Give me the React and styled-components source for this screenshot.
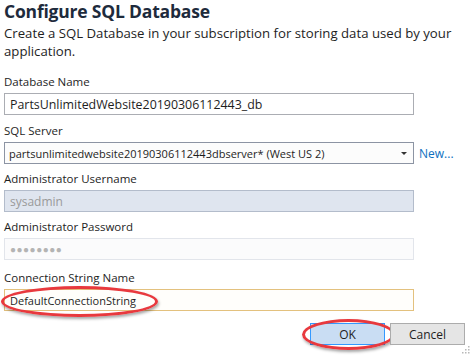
import React from 'react';
import styled, { createGlobalStyle } from 'styled-components';

const Global = createGlobalStyle`
  html, body { margin: 0; padding: 0; background: #ffffff; }
  body { font-family: "Open Sans", "Noto Sans", sans-serif; color: #1e1e1e; }
`;

const Page = styled.div`
  position: relative;
  width: 471px;
  height: 355px;
  box-sizing: border-box;
  padding: 0 6px 0 4px;
  overflow: hidden;
  display: flex;
  flex-direction: column;
`;

const Title = styled.h1`
  margin: 0;
  font-size: 17.5px;
  font-weight: 700;
  letter-spacing: -0.2px;
  line-height: 22px;
  color: #1e2b3c;
`;

const Subtitle = styled.p`
  margin: 2px 0 0;
  font-size: 13.2px;
  line-height: 18px;
  color: #1e1e1e;
`;

const Field = styled.div`
  display: flex;
  flex-direction: column;
  margin-top: ${p => p.$mt}px;
`;

const Label = styled.label`
  font-size: 11.5px;
  line-height: 16px;
  height: 16px;
  margin-bottom: 3px;
  color: #1e1e1e;
`;

const Row = styled.div`
  display: flex;
  align-items: center;
  gap: 5px;
`;

const variants = {
  normal: { bg: '#ffffff', border: '#abadb3', color: '#1e1e1e' },
  select: { bg: '#fcfcfc', border: '#8c94a3', color: '#1e1e1e' },
  disabled: { bg: '#dfe5ef', border: '#b3bccb', color: '#9a9a9a' },
  faint: { bg: '#fbfbfc', border: '#e2e5eb', color: '#b0b0b0' },
  focus: { bg: '#fffefb', border: '#e3c17e', color: '#1e1e1e' },
};

const Box = styled.div`
  position: relative;
  box-sizing: border-box;
  width: 410px;
  height: 22px;
  display: flex;
  align-items: center;
  padding: 0 ${p => (p.$v === 'select' ? 4 : 5)}px;
  background: ${p => variants[p.$v].bg};
  border: 1px solid ${p => variants[p.$v].border};
  color: ${p => variants[p.$v].color};
  font-size: ${p => p.$fs || 12}px;
  white-space: nowrap;
`;

const BoxText = styled.span`
  flex: 1;
`;

const Dots = styled.span`
  font-size: 10px;
  letter-spacing: 0.5px;
  color: #b4b4b4;
`;

const Arrow = styled.span`
  width: 0;
  height: 0;
  margin-right: 2px;
  border-left: 3px solid transparent;
  border-right: 3px solid transparent;
  border-top: 3px solid #333;
`;

const Link = styled.a`
  font-size: 12px;
  color: #0e70c0;
  text-decoration: none;
`;

const Buttons = styled.div`
  display: flex;
  justify-content: flex-end;
  gap: 5px;
  margin-top: 12px;
`;

const Button = styled.button`
  position: relative;
  box-sizing: border-box;
  width: 75px;
  height: 22px;
  font-family: inherit;
  font-size: 12px;
  color: #1e1e1e;
  background: ${p => (p.$primary ? '#c9ddf3' : '#e5e5e5')};
  border: 1px solid ${p => (p.$primary ? '#3399ff' : '#acacac')};
  padding: 0;
`;

const Ring = styled.span`
  position: absolute;
  left: ${p => p.$l}px;
  top: ${p => p.$t}px;
  width: ${p => p.$w}px;
  height: ${p => p.$h}px;
  box-sizing: border-box;
  border: 3px solid #e8393e;
  border-radius: 50%;
  box-shadow: 1px 2px 3px rgba(0, 0, 0, 0.35);
  pointer-events: none;
`;

const Grip = styled.svg`
  position: absolute;
  right: 1px;
  bottom: 1px;
`;

export default function App() {
  return (
    <>
      <Global />
      <Page>
        <Title>Configure SQL Database</Title>
        <Subtitle>
          Create a SQL Database in your subscription for storing data used by your application.
        </Subtitle>

        <Field $mt={14}>
          <Label>Database Name</Label>
          <Box $v="normal" $fs={12.4}><BoxText>PartsUnlimitedWebsite20190306112443_db</BoxText></Box>
        </Field>

        <Field $mt={8}>
          <Label>SQL Server</Label>
          <Row>
            <Box $v="select" $fs={11}>
              <BoxText>partsunlimitedwebsite20190306112443dbserver* (West US 2)</BoxText>
              <Arrow />
            </Box>
            <Link href="#">New...</Link>
          </Row>
        </Field>

        <Field $mt={7}>
          <Label>Administrator Username</Label>
          <Box $v="disabled"><BoxText>sysadmin</BoxText></Box>
        </Field>

        <Field $mt={7}>
          <Label>Administrator Password</Label>
          <Box $v="faint"><Dots>●●●●●●●●</Dots></Box>
        </Field>

        <Field $mt={10}>
          <Label>Connection String Name</Label>
          <Box $v="focus" $fs={11}>
            <BoxText>DefaultConnectionString</BoxText>
            <Ring $l={-4} $t={-4} $w={157} $h={31} />
          </Box>
        </Field>

        <Buttons>
          <Button $primary>
            OK
            <Ring $l={-9} $t={-5} $w={93} $h={31} />
          </Button>
          <Button>Cancel</Button>
        </Buttons>

        <Grip width="8" height="8" viewBox="0 0 8 8">
          {[[6, 0], [6, 3], [3, 3], [6, 6], [3, 6], [0, 6]].map(([x, y], i) => (
            <rect key={i} x={x} y={y} width="1.5" height="1.5" fill="#b8b8b8" />
          ))}
        </Grip>
      </Page>
    </>
  );
}
